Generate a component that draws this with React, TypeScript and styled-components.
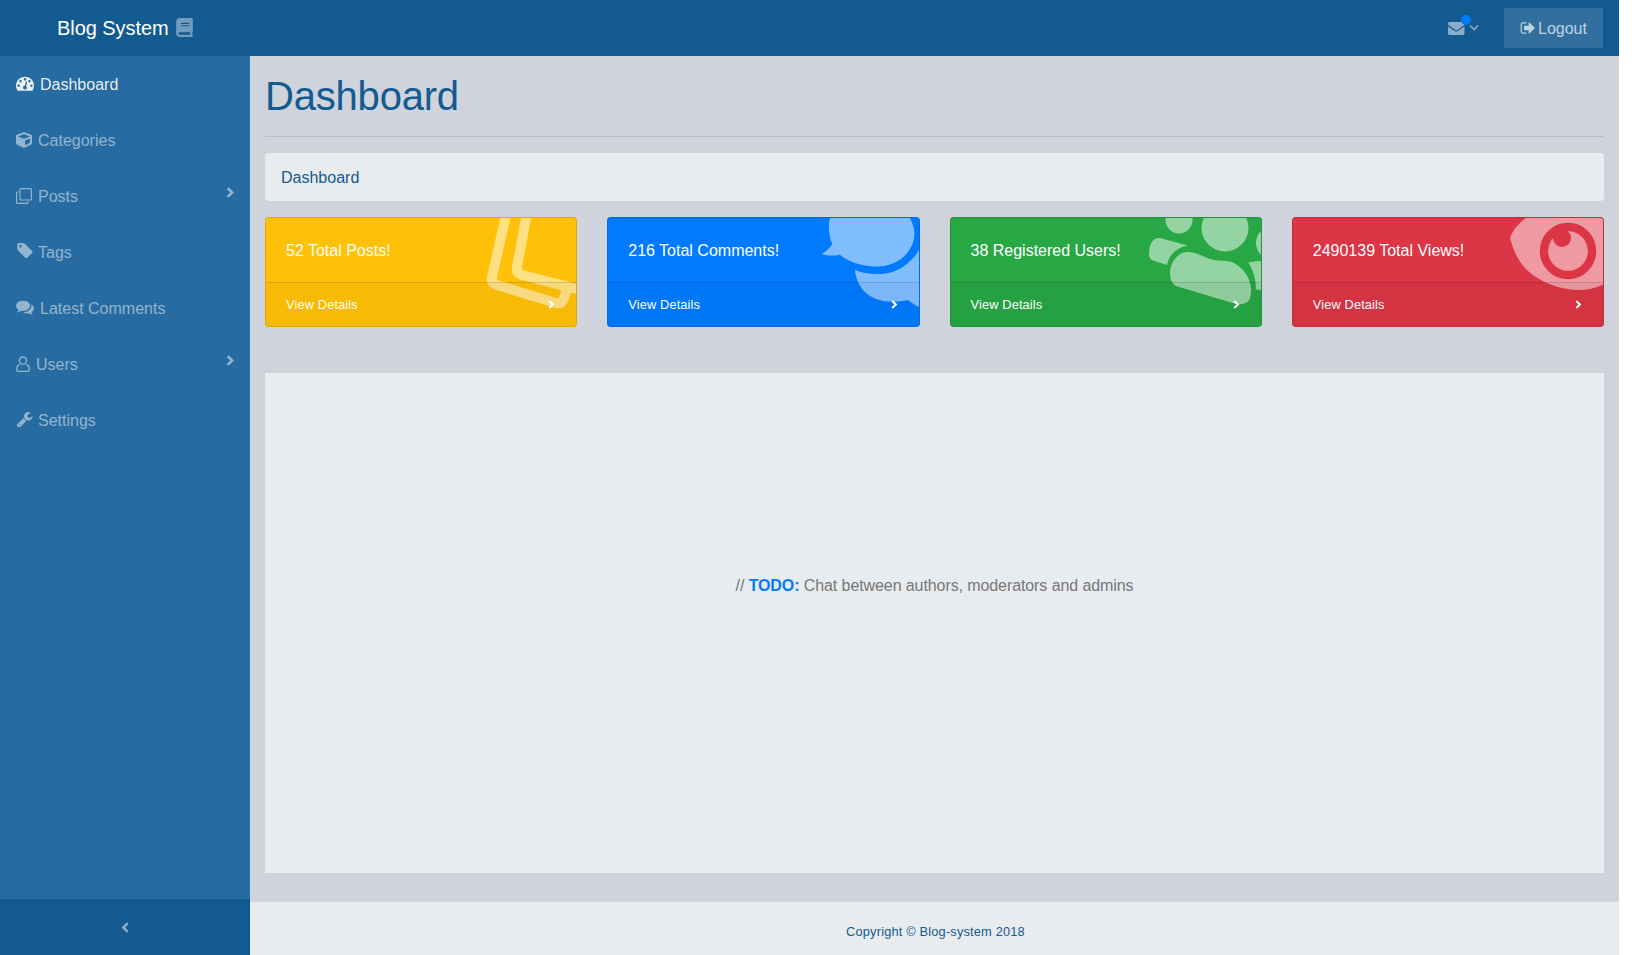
import React from "react";
import styled, { createGlobalStyle } from "styled-components";
import { FaBook, FaCube } from "react-icons/fa";

const P = {
  gauge: "M384 1152q0-53-37.5-90.5t-90.5-37.5-90.5 37.5-37.5 90.5 37.5 90.5 90.5 37.5 90.5-37.5 37.5-90.5zm192-448q0-53-37.5-90.5t-90.5-37.5-90.5 37.5-37.5 90.5 37.5 90.5 90.5 37.5 90.5-37.5 37.5-90.5zm428 481l101-382q6-26-7.5-48.5t-38.5-29.5-48 7-30 39l-101 382q-60 5-107 43.5t-63 98.5q-20 77 20 146t117 89 146-20 89-117q16-60-6-117t-72-91zm660-33q0-53-37.5-90.5t-90.5-37.5-90.5 37.5-37.5 90.5 37.5 90.5 90.5 37.5 90.5-37.5 37.5-90.5zm-640-640q0-53-37.5-90.5t-90.5-37.5-90.5 37.5-37.5 90.5 37.5 90.5 90.5 37.5 90.5-37.5 37.5-90.5zm448 192q0-53-37.5-90.5t-90.5-37.5-90.5 37.5-37.5 90.5 37.5 90.5 90.5 37.5 90.5-37.5 37.5-90.5zm320 448q0 261-141 483-19 29-54 29h-1402q-35 0-54-29-141-221-141-483 0-182 71-348t191-286 286-191 348-71 348 71 286 191 191 286 71 348z",
  clone: "M1664 1632v-1088q0-13-9.5-22.5t-22.5-9.5h-1088q-13 0-22.5 9.5t-9.5 22.5v1088q0 13 9.5 22.5t22.5 9.5h1088q13 0 22.5-9.5t9.5-22.5zm128-1088v1088q0 66-47 113t-113 47h-1088q-66 0-113-47t-47-113v-1088q0-66 47-113t113-47h1088q66 0 113 47t47 113zm-384-384v160h-128v-160q0-13-9.5-22.5t-22.5-9.5h-1088q-13 0-22.5 9.5t-9.5 22.5v1088q0 13 9.5 22.5t22.5 9.5h160v128h-160q-66 0-113-47t-47-113v-1088q0-66 47-113t113-47h1088q66 0 113 47t47 113z",
  tag: "M576 448q0-53-37.5-90.5t-90.5-37.5-90.5 37.5-37.5 90.5 37.5 90.5 90.5 37.5 90.5-37.5 37.5-90.5zm1067 576q0 53-37 90l-491 492q-39 37-91 37-53 0-90-37l-715-716q-38-37-64.5-101t-26.5-117v-416q0-52 38-90t90-38h416q53 0 117 26.5t102 64.5l715 714q37 39 37 91z",
  comments: "M1408 768q0 139-94 257t-256.5 186.5-353.5 68.5q-86 0-176-16-124 88-278 128-36 9-86 16h-3q-11 0-20.5-8t-11.5-21q-1-3-1-6.5t.5-6.5 2-6l2.5-5 3.5-5.5 4-5 4.5-5 4-4.5q5-6 23-25t26-29.5 22.5-29 25-38.5 20.5-44q-124-72-195-177t-71-224q0-139 94-257t256.5-186.5 353.5-68.5 353.5 68.5 256.5 186.5 94 257zm384 256q0 120-71 224.5t-195 176.5q10 24 20.5 44t25 38.5 22.5 29 26 29.5 23 25q1 1 4 4.5t4.5 5 4 5 3.5 5.5l2.5 5 2 6 .5 6.5-1 6.5q-3 14-13 22t-22 7q-50-7-86-16-154-40-278-128-90 16-176 16-271 0-472-132 58 4 88 4 161 0 309-45t264-129q125-92 192-212t67-254q0-77-23-152 129 71 204 178t75 230z",
  wrench: "M448 1472q0-26-19-45t-45-19-45 19-19 45 19 45 45 19 45-19 19-45zm644-420l-682 682q-37 37-90 37-52 0-91-37l-106-108q-38-36-38-90 0-53 38-91l681-681q39 98 114.5 173.5t173.5 114.5zm634-435q0 39-23 106-47 134-164.5 217.5t-258.5 83.5q-185 0-316.5-131.5t-131.5-316.5 131.5-316.5 316.5-131.5q58 0 121.5 16.5t107.5 46.5q16 11 16 28t-16 28l-293 169v224l193 107q5-3 79-48.5t135.5-81 70.5-35.5q15 0 23.5 10t8.5 25z",
  envelope: "M1792 710v794q0 66-47 113t-113 47h-1472q-66 0-113-47t-47-113v-794q44 49 101 87 362 246 497 345 57 42 92.5 65.5t94.5 48 110 24.5h2q51 0 110-24.5t94.5-48 92.5-65.5q170-123 498-345 57-39 100-87zm0-294q0 79-49 151t-122 123q-376 261-468 325-10 7-42.5 30.5t-54 38-52 32.5-57.5 27-50 9h-2q-23 0-50-9t-57.5-27-52-32.5-54-38-42.5-30.5q-91-64-262-182.5t-205-142.5q-62-42-117-115.5t-55-136.5q0-78 41.5-130t118.5-52h1472q65 0 112.5 47t47.5 113z",
  signout: "M704 1440q0 4 1 20t.5 26.5-3 23.5-10 19.5-20.5 6.5h-320q-119 0-203.5-84.5t-84.5-203.5v-704q0-119 84.5-203.5t203.5-84.5h320q13 0 22.5 9.5t9.5 22.5q0 4 1 20t.5 26.5-3 23.5-10 19.5-20.5 6.5h-320q-66 0-113 47t-47 113v704q0 66 47 113t113 47h312l11.5 1 11.5 3 8 5.5 7 9 2 13.5zm928-544q0 26-19 45l-544 544q-19 19-45 19t-45-19-19-45v-288h-448q-26 0-45-19t-19-45v-384q0-26 19-45t45-19h448v-288q0-26 19-45t45-19 45 19l544 544q19 19 19 45z",
};

const Global = createGlobalStyle`
  html, body { margin: 0; padding: 0; height: 100%; background: #fff; overflow: hidden; }
  body { padding-right: 16px; box-sizing: border-box; font-family: "Liberation Sans", Arial, sans-serif; font-size: 16px; line-height: 24px; }
  #root { height: 100%; }
  * { box-sizing: border-box; }
`;

const Shell = styled.div`
  display: grid;
  grid-template-columns: 250px 1fr;
  grid-template-rows: 56px 1fr;
  height: 100%;
`;

const TopBar = styled.header`
  grid-column: 1 / 3;
  background: #135a91;
  display: flex;
  align-items: center;
  padding-right: 16px;
`;

const Brand = styled.a`
  display: flex;
  align-items: center;
  gap: 6px;
  margin-left: 57px;
  color: #fff;
  font-size: 20px;
  line-height: 30px;
  letter-spacing: -0.06px;
  & > svg { opacity: 0.4; margin-top: -1px; }
`;

const TopActions = styled.div`
  margin-left: auto;
  display: flex;
  align-items: center;
`;

const MailButton = styled.div`
  position: relative;
  display: flex;
  align-items: center;
  gap: 4px;
  width: 56px;
  height: 40px;
  color: rgba(255, 255, 255, 0.5);
`;

const Dot = styled.span`
  position: absolute;
  left: 13px;
  top: 7px;
  width: 10px;
  height: 10px;
  border-radius: 50%;
  background: #007bff;
`;

const LogoutButton = styled.a`
  display: flex;
  align-items: center;
  gap: 3px;
  width: 99px;
  height: 40px;
  padding-left: 16px;
  background: rgba(255, 255, 255, 0.13);
  color: rgba(255, 255, 255, 0.7);
  font-size: 16px;
`;

const LogoutLabel = styled.span`
  padding-top: 2px;
`;

const Sidebar = styled.nav`
  background: #266ba1;
  display: flex;
  flex-direction: column;
`;

const NavList = styled.ul`
  list-style: none;
  margin: 0;
  padding: 0;
  flex: 1;
`;

const NavRow = styled.li<{ $active?: boolean }>`
  display: flex;
  align-items: center;
  height: 56px;
  padding: 0 14px 0 16px;
  color: ${(p) => (p.$active ? "rgba(255,255,255,0.9)" : "rgba(255,255,255,0.5)")};
`;

const NavIconSlot = styled.span<{ $w: number }>`
  display: inline-flex;
  width: ${(p) => p.$w}px;
  align-items: center;
  margin-top: -1px;
`;

const NavLabel = styled.span`
  padding-top: 2px;
`;

const Caret = styled.span`
  margin-left: auto;
  display: inline-flex;
  margin-top: -8px;
`;

const Toggle = styled.button`
  height: 56px;
  background: #135a91;
  border: 0;
  color: rgba(255, 255, 255, 0.5);
  display: flex;
  align-items: center;
  justify-content: center;
  padding: 0;
`;

const Main = styled.main`
  background: #ced3dc;
  display: flex;
  flex-direction: column;
  min-width: 0;
`;

const Content = styled.div`
  flex: 1;
  padding: 16px 15px 0 15px;
`;

const Title = styled.h1`
  margin: 0;
  font-size: 40px;
  line-height: 48px;
  font-weight: 400;
  letter-spacing: -0.2px;
  color: #135a91;
`;

const Rule = styled.hr`
  margin: 16px 0;
  border: 0;
  border-top: 1px solid #b9bec8;
`;

const Crumbs = styled.div`
  height: 48px;
  padding: 13px 16px 11px;
  background: #e9ecef;
  border-radius: 4px;
  color: #135a91;
  margin-bottom: 16px;
`;

const CardGrid = styled.div`
  display: grid;
  grid-template-columns: repeat(4, 1fr);
  gap: 30px;
  margin-bottom: 46px;
`;

const StatCard = styled.div<{ $bg: string }>`
  position: relative;
  overflow: hidden;
  height: 110px;
  background: ${(p) => p.$bg};
  border: 1px solid rgba(0, 0, 0, 0.125);
  border-radius: 4px;
  color: #fff;
  display: flex;
  flex-direction: column;
`;

const StatBody = styled.div`
  position: relative;
  z-index: 1;
  height: 64px;
  padding: 21px 20px 0;
`;

const StatFooter = styled.a`
  position: relative;
  z-index: 1;
  flex: 1;
  display: flex;
  align-items: center;
  justify-content: space-between;
  padding: 0 20px;
  font-size: 12.8px;
  letter-spacing: 0.14px;
  background: rgba(0, 0, 0, 0.03);
  border-top: 1px solid rgba(0, 0, 0, 0.125);
`;

const CardArt = styled.svg`
  position: absolute;
  left: -1px;
  top: -1px;
  width: 312px;
  height: 110px;
`;

const Panel = styled.section`
  height: 500px;
  background: #e9ecef;
  display: flex;
  justify-content: center;
  padding-top: 201px;
  color: #777;
  letter-spacing: -0.09px;
`;

const Todo = styled.strong`
  color: #007bff;
`;

const Foot = styled.footer`
  height: 53px;
  padding: 6px 0 0 2px;
  background: #e9ecef;
  display: flex;
  align-items: center;
  justify-content: center;
  font-size: 12.8px;
  letter-spacing: 0.18px;
  color: #135a91;
`;

const WHITE = "rgba(255,255,255,0.5)";

const Glyph = ({ d, box, w, h, flip }: { d: string; box: string; w: number; h: number; flip?: boolean }) => (
  <svg width={w} height={h} viewBox={box} fill="currentColor">
    <path d={d} transform={flip ? "translate(0 1792) scale(1 -1)" : undefined} />
  </svg>
);

const UserOutline = () => (
  <svg width="14" height="16" viewBox="0 0 14 16" fill="none" stroke="currentColor" strokeWidth="1.3">
    <circle cx="7" cy="4.6" r="3.6" />
    <path d="M3.8 8.6 C2 9 .7 10.6 .7 13 V14 Q.7 15.3 2 15.3 H12 Q13.3 15.3 13.3 14 V13 C13.3 10.6 12 9 10.2 8.6" />
  </svg>
);

const Chevron = ({ dir = "right", size = 8 }: { dir?: "right" | "left" | "down"; size?: number }) => {
  const pts = dir === "right" ? "2.5,1 6.5,5 2.5,9" : dir === "left" ? "7,1 3,5 7,9" : "1,2.5 5,6.5 9,2.5";
  return (
    <svg width={size} height={size} viewBox="0 0 10 10" fill="none" stroke="currentColor" strokeWidth={dir === "down" ? 1.6 : 2.3}>
      <polyline points={pts} />
    </svg>
  );
};

const nav = [
  { label: "Dashboard", icon: <Glyph d={P.gauge} box="0 192 1792 1408" w={18} h={14.2} />, slot: 24, active: true },
  { label: "Categories", icon: <FaCube size={16} />, slot: 22 },
  { label: "Posts", icon: <Glyph d={P.clone} box="0 0 1792 1792" w={16} h={16} flip />, slot: 22, caret: true },
  { label: "Tags", icon: <Glyph d={P.tag} box="0 128 1643 1600" w={16.5} h={16.1} />, slot: 22 },
  { label: "Latest Comments", icon: <Glyph d={P.comments} box="0 192 1792 1500" w={18} h={15} />, slot: 24 },
  { label: "Users", icon: <UserOutline />, slot: 20, caret: true },
  { label: "Settings", icon: <Glyph d={P.wrench} box="0 128 1726 1640" w={16.5} h={15.7} />, slot: 22 },
];

const ClonePosts = () => (
  <CardArt viewBox="0 0 312 110" fill="none" stroke={WHITE} strokeWidth="10" strokeLinejoin="round">
    <path d="M241.5 -4 L227 60 Q226 66 232 68 L291 86 Q297 87.5 298.5 82 L303 70 M262 -4 L252 50 Q251 56 257 58 L316 73" />
  </CardArt>
);

const CommentBubbles = () => (
  <CardArt viewBox="0 0 312 110" fill={WHITE}>
    <path d="M224 -2 C221 5 221 18 225.3 27 C222 32 218 35 214.7 37 C220 39 227 39 233 37.7 C241 45 255 49 268 49.5 C285 50 298 42 304 30 C309 21 309 10 301 -2 Z" />
    <path d="M248 53 C256 56 263 57 270 57 C283 58 295 52 303 44 C307 40 310 37 312 33 L312 90 C308 88 303 85 301 83 C293 85 284 85 276 84 C262 81 250 72 248 53 Z" />
  </CardArt>
);

const PeopleArt = () => (
  <CardArt viewBox="0 0 312 110" fill={WHITE}>
    <circle cx="275" cy="11" r="23.5" />
    <circle cx="229" cy="3" r="13.5" />
    <circle cx="323" cy="26" r="17" />
    <path d="M199 37 C199 27 203 20 210 21 L238 28.5 C228 30 219 37 217 48 L203 43.5 C200 42.5 199 40 199 37 Z" />
    <path d="M220 56 C220 45 228 35 238 35 C247 35 255 41 263 42.7 C270 44 278 43 284 46 C294 52 300 60 301 72 C301 80 300 85 294 86.5 C291 87.5 288 87.5 286 87 L226 69 C222 67 220 62 220 56 Z" />
    <path d="M298 45.5 L308 44 L312 44 L312 73 L306 72.5 C306 62 303 52 298 45.5 Z" />
  </CardArt>
);

const EyeWatch = () => (
  <CardArt viewBox="0 0 312 110">
    <path
      d="M218 21 C221 33 226 43 233 51 C243 62 263 72 285 73 C296 73 304 71 312 67 L312 -2 L238 -2 C228 5 221 12 218 21 Z"
      fill={WHITE}
    />
    <circle cx="276" cy="34" r="24" fill="none" stroke="#dc3545" strokeWidth="8.4" />
    <circle cx="270" cy="21" r="9" fill="#dc3545" />
  </CardArt>
);

const cards = [
  { title: "52 Total Posts!", bg: "#ffc107", Art: ClonePosts },
  { title: "216 Total Comments!", bg: "#007bff", Art: CommentBubbles },
  { title: "38 Registered Users!", bg: "#28a745", Art: PeopleArt },
  { title: "2490139 Total Views!", bg: "#dc3545", Art: EyeWatch },
];

export default function App() {
  return (
    <>
      <Global />
      <Shell>
        <TopBar>
          <Brand>
            Blog System <FaBook size={19} />
          </Brand>
          <TopActions>
            <MailButton>
              <Glyph d={P.envelope} box="0 256 1792 1408" w={16.5} h={13} />
              <Chevron dir="down" size={10} />
              <Dot />
            </MailButton>
            <LogoutButton>
              <Glyph d={P.signout} box="0 0 1664 1792" w={15} h={16} />
              <LogoutLabel>Logout</LogoutLabel>
            </LogoutButton>
          </TopActions>
        </TopBar>
        <Sidebar>
          <NavList>
            {nav.map((n) => (
              <NavRow key={n.label} $active={n.active}>
                <NavIconSlot $w={n.slot}>{n.icon}</NavIconSlot>
                <NavLabel>{n.label}</NavLabel>
                {n.caret && (
                  <Caret>
                    <Chevron size={11} />
                  </Caret>
                )}
              </NavRow>
            ))}
          </NavList>
          <Toggle>
            <Chevron dir="left" size={11} />
          </Toggle>
        </Sidebar>
        <Main>
          <Content>
            <Title>Dashboard</Title>
            <Rule />
            <Crumbs>Dashboard</Crumbs>
            <CardGrid>
              {cards.map(({ title, bg, Art }) => (
                <StatCard key={title} $bg={bg}>
                  <Art />
                  <StatBody>{title}</StatBody>
                  <StatFooter>
                    View Details
                    <Chevron size={9} />
                  </StatFooter>
                </StatCard>
              ))}
            </CardGrid>
            <Panel>
              <span>
                // <Todo>TODO:</Todo> Chat between authors, moderators and admins
              </span>
            </Panel>
          </Content>
          <Foot>Copyright © Blog-system 2018</Foot>
        </Main>
      </Shell>
    </>
  );
}
